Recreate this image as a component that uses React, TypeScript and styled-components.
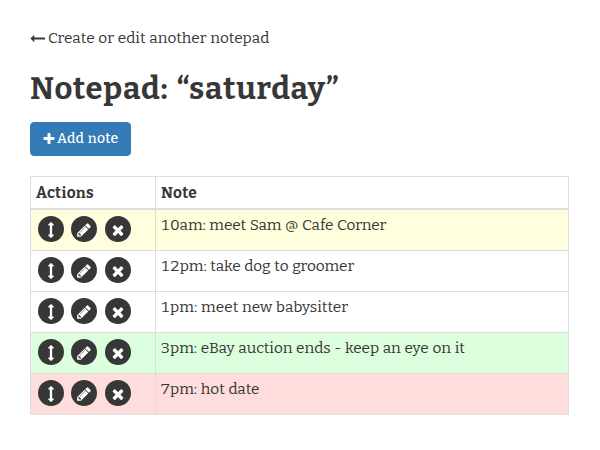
import React from 'react';
import styled, { createGlobalStyle } from 'styled-components';

const GlobalStyle = createGlobalStyle`
  * { box-sizing: border-box; }
  body {
    margin: 0;
    background: #fff;
    color: #373737;
    font-family: Bitter, 'DejaVu Serif Condensed', 'DejaVu Serif', serif;
    font-size: 15.4px;
    line-height: 22px;
    font-variant-numeric: lining-nums;
  }
`;

const Page = styled.main`
  padding: 27px 31px 0 30px;
`;

const BackLink = styled.a`
  display: flex;
  align-items: center;
  height: 22px;
  gap: 3px;
  color: #373737;
  text-decoration: none;
  white-space: nowrap;
`;

const Text = styled.span<{ $track?: number }>`
  letter-spacing: ${(p) => p.$track ?? 0}px;
  word-spacing: 0.7px;
  white-space: nowrap;
`;

const Title = styled.h1`
  margin: 22px 0 15px;
  height: 36px;
  font-size: 31px;
  line-height: 36px;
  font-weight: 700;
  letter-spacing: 0.75px;
  word-spacing: 2.2px;
  white-space: nowrap;
`;

const AddButton = styled.button`
  display: flex;
  align-items: center;
  width: 101px;
  height: 34px;
  padding: 0 0 1px 11px;
  gap: 1px;
  border: 1px solid #337ab7;
  border-radius: 4px;
  background: #337ab7;
  color: #fff;
  font: inherit;
  font-size: 14px;
  font-weight: 500;
`;

const Table = styled.div`
  margin-top: 20px;
  border: 1px solid #ddd;
`;

const Row = styled.div<{ $bg?: string }>`
  display: grid;
  grid-template-columns: 125px 1fr;
  height: 41px;
  background: ${(p) => p.$bg ?? '#fff'};
  border-bottom: 1px solid #ddd;
`;

const NoteRow = styled(Row)`
  &:last-child {
    height: 40px;
    border-bottom: 0;
  }
`;

const HeadRow = styled(Row)`
  height: 33px;
  border-bottom-width: 2px;
  font-weight: 700;
`;

const Cell = styled.div`
  padding: 4px 5px 4px 4.4px;
`;

const HeadCell = styled(Cell)`
  padding: 5px 5px 4px;
  &:first-child { border-right: 1px solid #ddd; }
`;

const ActionsCell = styled(Cell)`
  display: flex;
  align-items: flex-start;
  gap: 7px;
  padding: 6px 0 0 7px;
  border-right: 1px solid #ddd;
`;

const RoundButton = styled.button`
  display: grid;
  place-items: center;
  width: 26px;
  height: 26px;
  padding: 1px 0 0;
  border: 0;
  border-radius: 50%;
  background: #373737;
  color: #fff;
  &:last-child {
    margin-left: 1px;
  }
`;

const Svg = styled.svg<{ $size: number }>`
  display: block;
  flex: none;
  width: ${(p) => p.$size}px;
  height: ${(p) => p.$size}px;
  fill: currentColor;
`;

const paths = {
  back: 'M1792 800v192q0 14-9 23t-23 9h-1248v224q0 21-19 29t-35-5l-384-350q-10-10-10-23 0-14 10-24l384-354q16-14 35-6 19 9 19 29v224h1248q14 0 23 9t9 23z',
  plus: 'M1600 736v192q0 40-28 68t-68 28h-416v416q0 40-28 68t-68 28h-192q-40 0-68-28t-28-68v-416h-416q-40 0-68-28t-28-68v-192q0-40 28-68t68-28h416v-416q0-40 28-68t68-28h192q40 0 68 28t28 68v416h416q40 0 68 28t28 68z',
  move: 'M1216 320q0 26-19 45t-45 19h-128v1024h128q26 0 45 19t19 45-19 45l-256 256q-19 19-45 19t-45-19l-256-256q-19-19-19-45t19-45 45-19h128v-1024h-128q-26 0-45-19t-19-45 19-45l256-256q19-19 45-19t45 19l256 256q19 19 19 45z',
  pencil: 'M491 1536l91-91-235-235-91 91v107h128v128h107zm523-928q0-22-22-22-10 0-17 7l-542 542q-7 7-7 17 0 22 22 22 10 0 17-7l542-542q7-7 7-17zm-54-192l416 416-832 832h-416v-416zm683 96q0 53-37 90l-166 166-416-416 166-165q36-38 90-38 53 0 91 38l235 234q37 39 37 91z',
  times: 'M1490 1322q0 40-28 68l-136 136q-28 28-68 28t-68-28l-294-294-294 294q-28 28-68 28t-68-28l-136-136q-28-28-28-68t28-68l294-294-294-294q-28-28-28-68t28-68l136-136q28-28 68-28t68 28l294 294 294-294q28-28 68-28t68 28l136 136q28 28 28 68t-28 68l-294 294 294 294q28 28 28 68z',
};

function Icon({ name, size = 16 }: { name: keyof typeof paths; size?: number }) {
  return (
    <Svg $size={size} viewBox="0 0 1792 1792" aria-hidden="true">
      <path d={paths[name]} />
    </Svg>
  );
}

const notes: { text: string; bg?: string; track?: number }[] = [
  { text: '10am: meet Sam @ Cafe Corner', bg: '#ffffdd', track: -0.1 },
  { text: '12pm: take dog to groomer', track: -0.06 },
  { text: '1pm: meet new babysitter', track: 0.02 },
  { text: '3pm: eBay auction ends - keep an eye on it', bg: '#ddffdd', track: -0.05 },
  { text: '7pm: hot date', bg: '#ffdddd', track: -0.03 },
];

export default function App() {
  return (
    <>
      <GlobalStyle />
      <Page>
        <BackLink>
          <Icon name="back" size={15} />
          <Text>Create or edit another notepad</Text>
        </BackLink>
        <Title>Notepad: “saturday”</Title>
        <AddButton>
          <Icon name="plus" size={14} />
          <Text $track={0.25}>Add note</Text>
        </AddButton>
        <Table>
          <HeadRow>
            <HeadCell><Text $track={0.3}>Actions</Text></HeadCell>
            <HeadCell><Text $track={0.3}>Note</Text></HeadCell>
          </HeadRow>
          {notes.map((n) => (
            <NoteRow key={n.text} $bg={n.bg}>
              <ActionsCell>
                <RoundButton aria-label="Move"><Icon name="move" /></RoundButton>
                <RoundButton aria-label="Edit"><Icon name="pencil" /></RoundButton>
                <RoundButton aria-label="Delete"><Icon name="times" /></RoundButton>
              </ActionsCell>
              <Cell><Text $track={n.track}>{n.text}</Text></Cell>
            </NoteRow>
          ))}
        </Table>
      </Page>
    </>
  );
}
